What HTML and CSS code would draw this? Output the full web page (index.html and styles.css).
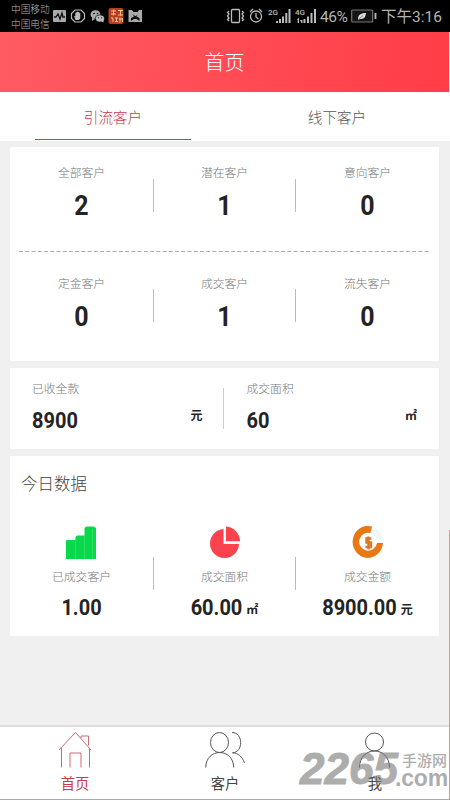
FILE: index.html
```html
<!DOCTYPE html>
<html lang="zh-CN">
<head>
<meta charset="utf-8">
<title>首页</title>
<link rel="stylesheet" href="styles.css">
</head>
<body>
<div class="app">
  <div class="status">
    <div class="carriers"><span>中国移动</span><span>中国电信</span></div>
    <svg class="notices" width="92" height="16" viewBox="0 0 92 16">
      <rect x="0" y="2" width="13" height="12" rx="1" fill="#aaa"/>
      <path d="M1 9h2l2-3 2 5 2-6 1 4h2" fill="none" stroke="#111" stroke-width="1.3"/>
      <path d="M22 2h6l3.500 3.500v5L28 14h-6l-3.500-3.500v-5z" fill="none" stroke="#bbb" stroke-width="1.200"/>
      <path d="M22.500 12l-1.500-4 1.300.3V5l1.200-.7 1.200-.7 1.300.7 1.300 1v5L26 12z" fill="#bbb"/>
      <ellipse cx="42.500" cy="6.500" rx="5" ry="4.300" fill="#aaa"/>
      <path d="M39 9v4l3-2z" fill="#aaa"/>
      <ellipse cx="47" cy="10.500" rx="4.500" ry="3.600" fill="#bbb" stroke="#000" stroke-width=".7"/>
      <path d="M48 13l2.500 1.500v-3z" fill="#bbb"/>
      <circle cx="41" cy="5.500" r=".8"/><circle cx="44.500" cy="5.500" r=".8"/><circle cx="45.500" cy="9.800" r=".6"/><circle cx="48.500" cy="9.800" r=".6"/>
      <rect x="55.500" y="0" width="15" height="16" rx="2" fill="#b83c20"/>
      <path d="M58 3h5M58 6h5M60.500 1.500v6M65 2.500h5M67.500 2.500v5M65 7h5M58 10h2v4M62 10h3M62 13.500h3M63.500 10v4M67 9.500v5M66 11h4M69.500 10v4" fill="none" stroke="#efc58b" stroke-width="1"/>
      <path d="M75.500 2H79l1.500 2h4L86 2h3v12H75.500z" fill="#aaa"/>
      <path d="M79.500 6l1.500 2.500-3 1.500v3l3-2h2.500l3 2v-3l-3-1.500L85 6l-2 2h-1z" fill="#111"/>
    </svg>
    <svg class="signals" width="92" height="18" viewBox="0 0 92 18">
      <g fill="none" stroke="#bbb" stroke-width="1.300">
        <rect x="5.500" y="2.500" width="8" height="13" rx="1"/>
        <path d="M3 4L1.500 5.500 3 7 1.500 9 3 11 1.500 12.500 3 14M16 4l1.500 1.500L16 7l1.500 2-1.500 2 1.500 1.500L16 14"/>
        <circle cx="30" cy="9.500" r="5.500"/><path d="M30 6v4l2.500 2M24 5l3-3M36 5l-3-3"/>
      </g>
      <g fill="#bbb">
        <path d="M50 14h2v2h-2zM53 12h2v4h-2zM56 9.500h2V16h-2zM59.300 6h2v10h-2zM62.500 2h2v14h-2zM71 12.500l2-2V16h-1.300v-3zM75.500 16l-1.500-3h2.500v3zM77.500 12h2v4h-2zM81 9.500h2V16h-2zM84.500 6h2v10h-2zM88 2h2v14h-2z"/>
      </g>
      <text x="42" y="8">2G</text><text x="69" y="8">4G</text>
    </svg>
    <span class="percent">46%</span>
    <svg class="battery" width="26" height="14" viewBox="0 0 26 14">
      <rect x=".7" y="1" width="21" height="12" rx="1" fill="#151515" stroke="#777" stroke-width="1.200"/>
      <path d="M24.500 4v6" stroke="#bbb" stroke-width="1.800"/>
      <path d="M7 11c0-5 2-7 8-7-.5 4.500-2 6-6 6z" fill="#ddd"/><path d="M7 11l5-4.500" stroke="#444" stroke-width=".6"/>
    </svg>
    <span class="clock">下午3:16</span>
  </div>
  <div class="header">首页</div>
  <div class="tabs">
    <div class="tab active"><span>引流客户</span></div>
    <div class="tab"><span>线下客户</span></div>
  </div>

  <div class="card customers">
    <div class="row">
      <div class="cell"><span class="label">全部客户</span><b class="count">2</b></div>
      <div class="cell"><span class="label">潜在客户</span><b class="count">1</b></div>
      <div class="cell"><span class="label">意向客户</span><b class="count">0</b></div>
    </div>
    <svg class="dashes" width="412" height="1" viewBox="0 0 412 1"><path d="M0 .5h412" stroke="#aaa" stroke-dasharray="4 2.240"/></svg>
    <div class="row second">
      <div class="cell"><span class="label">定金客户</span><b class="count">0</b></div>
      <div class="cell"><span class="label">成交客户</span><b class="count">1</b></div>
      <div class="cell"><span class="label">流失客户</span><b class="count">0</b></div>
    </div>
  </div>

  <div class="card totals">
    <div class="total"><span class="label">已收全款</span><div class="line"><b class="amount">8900</b><b class="unit">元</b></div></div>
    <div class="total"><span class="label">成交面积</span><div class="line"><b class="amount">60</b><b class="unit">㎡</b></div></div>
  </div>

  <div class="card today">
    <div class="heading">今日数据</div>
    <div class="row">
      <div class="cell">
        <svg class="icon" width="32" height="34" viewBox="0 0 32 34"><path d="M0 15.500l1-.5h8.500v-3l1.500-1.500h7.500V3l2-1.500h7L30 3v31H0z" fill="#08d849"/><path d="M9.500 14v20M18.500 10v24M26.500 4v30" stroke="#43e875" stroke-width=".6"/></svg>
        <span class="label">已成交客户</span><div class="line"><b class="amount">1.00</b></div>
      </div>
      <div class="cell">
        <svg class="icon" width="32" height="34" viewBox="0 0 32 34"><path d="M14.500 4v15H30A14.500 14.500 0 1 1 14.500 4z" fill="#fb424d"/><path d="M17 1.500A15 15 0 0 1 31 16.300H17z" fill="#fb424d"/></svg>
        <span class="label">成交面积</span><div class="line"><b class="amount">60.00</b><b class="unit">㎡</b></div>
      </div>
      <div class="cell">
        <svg class="icon" width="32" height="34" viewBox="0 0 32 34"><path d="M20 1.500L18.500 8A9 9 0 1 0 25 18h6A15.200 16 0 1 1 20 1.500z" fill="#e97813"/><path d="M21.500 2.500C26 4 29.500 8 30.500 14l-6 .5c-.5-3-2.500-5-5-6z" fill="#f1f6f8"/><path d="M19.500 13.500h-5v4h4.500v4.500h-5.500M16.500 11.500v13" fill="none" stroke="#dc762d" stroke-width="2.400"/></svg>
        <span class="label">成交金额</span><div class="line"><b class="amount">8900.00</b><b class="unit">元</b></div>
      </div>
    </div>
  </div>

  <div class="nav">
    <div class="item on">
      <svg width="40" height="38" viewBox="0 0 40 38"><path d="M4 19L20.500 1.500 36 19M6.500 17v19.500M34.500 17.500v19M15 36.500V22h11v14.500M26 7V5h7.500v9.500"/></svg>
      <span>首页</span>
    </div>
    <div class="item">
      <svg width="40" height="38" viewBox="0 0 40 38"><ellipse cx="14.500" cy="11.500" rx="9" ry="10"/><path d="M.7 36.500C1 16.500 28.500 16.500 28.700 36.500M27 1.500c11.500 0 11.500 20 .5 20.300 5.500 0 10 4 12 10.200"/></svg>
      <span>客户</span>
    </div>
    <div class="item">
      <svg width="40" height="38" viewBox="0 0 40 38"><circle cx="19.500" cy="11" r="9"/><path d="M4.500 36.500c0-22 30-22 30 0"/></svg>
      <span>我</span>
    </div>
  </div>
  <div class="watermark"><span class="mark-num">2265</span><div class="mark-side"><span class="mark-cn">手游网</span><span class="mark-com">.com</span></div></div>
  <div class="scroll"></div>
</div>
</body>
</html>
```
FILE: styles.css
```css
* { box-sizing: border-box; }
body { margin: 0; background: #f0f0f0; font-family: Roboto, "Noto Sans CJK SC", sans-serif; font-weight: 300; }
.app { position: relative; width: 450px; height: 800px; overflow: hidden; display: flex; flex-direction: column; }
svg { display: block; flex: none; }

.status { height: 32px; flex: none; background: #000; color: #b5b5b5; display: flex; align-items: center; padding-left: 11px; white-space: nowrap; }
.carriers { width: 41px; font-size: 9.7px; line-height: 15px; display: flex; flex-direction: column; padding-top: 2px; }
.notices { margin-left: 1px; }
.signals { margin-left: 81px; }
.signals text { font: 500 8px Roboto, sans-serif; fill: #bbb; }
.percent { margin-left: 2px; width: 31px; font-size: 15.500px; line-height: 20px; font-weight: 400; letter-spacing: -.5px; padding-top: 2px; }
.battery { margin-left: 0; }
.clock { margin-left: 4px; font-size: 15.500px; line-height: 20px; font-weight: 400; padding-top: 2px; }

.header { height: 60px; flex: none; width: 449px; background: linear-gradient(100deg, #ff5b63, #ff3d47); color: #fff; text-align: center; font-size: 20px; line-height: 62px; }
.tabs { height: 48.500px; flex: none; background: #fff; display: flex; padding: 0 1px; }
.tab { width: 50%; display: flex; justify-content: center; font-size: 14.600px; line-height: 53px; color: #555; }
.tab span { width: 156px; height: 48px; text-align: center; }
.tab.active span { color: #c5394c; border-bottom: 1px solid #c44152; }

.card { width: 429px; margin-left: 10px; background: #fff; flex: none; }
.row { display: flex; }
.cell { width: 143px; display: flex; flex-direction: column; align-items: center; position: relative; }
.cell + .cell::before { content: ""; position: absolute; left: 0; top: 32px; width: 1px; height: 33px; background: #bbb; }
.cell:last-child::before { left: -1px; }
.label { font-size: 11.800px; line-height: 16px; color: #777; white-space: nowrap; }
.count { font-size: 25px; font-weight: 700; line-height: 30px; color: #242424; transform: scaleY(1.080); margin-top: 10px; }
.amount { font-size: 20px; font-weight: 700; line-height: 26px; color: #242424; display: inline-block; transform: scaleY(1.060); }
.unit { font-size: 12px; line-height: 16px; color: #242424; font-weight: 700; }

.customers { margin-top: 6.500px; height: 214px; }
.customers .cell { padding-top: 18px; height: 104px; }
.dashes { margin-left: 9px; }
.customers .second .cell { padding-top: 24px; height: 109px; }
.second .cell + .cell::before { top: 37px; }

.totals { margin-top: 7px; height: 81px; display: flex; }
.total { position: relative; width: 215px; padding: 13px 22px 0 22px; display: flex; flex-direction: column; }
.total + .total::before { content: ""; position: absolute; left: -2px; top: 20px; width: 1.500px; height: 41px; background: #ccc; }
.total .line { display: flex; justify-content: space-between; margin-top: 11px; }

.today { margin-top: 7px; height: 180px; }
.heading { font-size: 16.500px; line-height: 24px; color: #444; padding: 17px 0 0 11px; height: 69px; }
.today .icon { margin-bottom: 10px; }
.today .line { display: flex; align-items: center; gap: 4px; margin-top: 10px; }
.today .unit { padding-top: 4px; }

.nav { margin-top: auto; height: 75px; flex: none; background: #fff; border-top: 2px solid #ddd; border-bottom: 1px solid #aaa; display: flex; }
.item { width: 150px; padding-top: 4px; display: flex; flex-direction: column; align-items: center; font-size: 14.300px; line-height: 20px; color: #444; }
.item svg { fill: none; stroke: #555; stroke-width: 1; }
.item span { margin-top: 5px; font-weight: 400; }
.item.on { color: #c5394c; }
.item.on svg { stroke: #c96a78; }

.watermark { position: absolute; left: 300px; top: 747px; display: flex; color: #777; opacity: .6; font-family: "Liberation Sans", "Noto Sans CJK SC", sans-serif; font-weight: 700; }
.mark-num { width: 95px; font-size: 44px; line-height: 44px; font-style: italic; -webkit-text-stroke: 1px #777; }
.mark-side { display: flex; flex-direction: column; }
.mark-cn { font-size: 15px; line-height: 16px; padding-left: 7px; font-weight: 500; margin-top: 6px; }
.mark-com { font-size: 23px; line-height: 18px; letter-spacing: -.2px; }
.scroll { position: absolute; right: 0; top: 530px; width: 1px; height: 270px; background: #f08c94; }
```
